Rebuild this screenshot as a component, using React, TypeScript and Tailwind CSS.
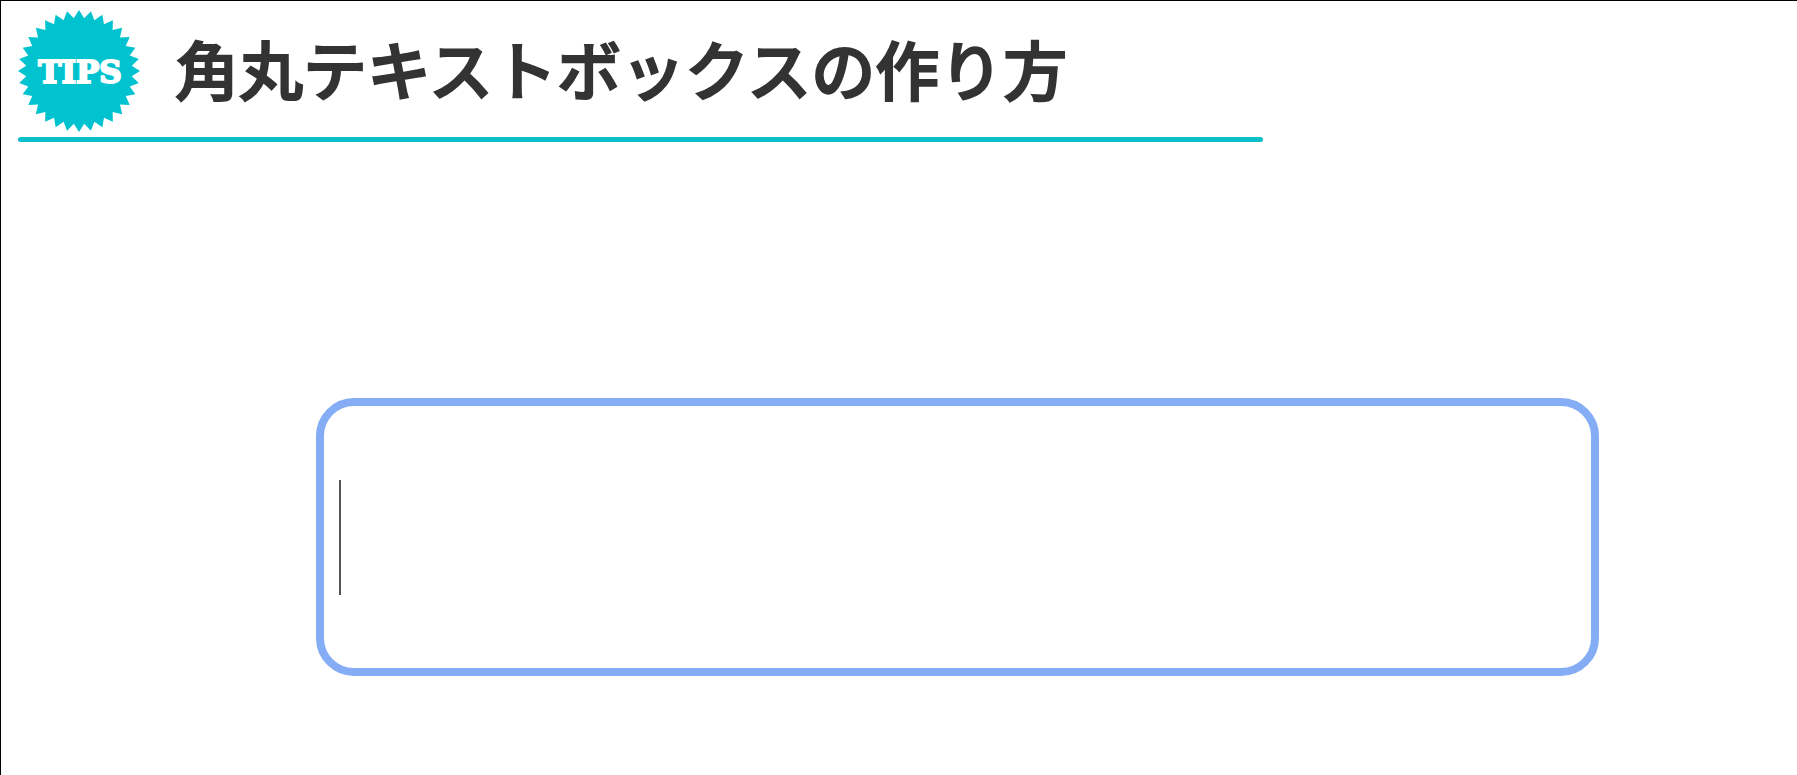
import React, { useState } from 'react';

const SPIKES = 32;

const burstPoints = Array.from({ length: SPIKES * 2 }, (_, i) => {
  const radius = i % 2 === 0 ? 61 : 53;
  const angle = (Math.PI * i) / SPIKES - Math.PI / 2;
  return `${(61 + radius * Math.cos(angle)).toFixed(2)},${(61 + radius * Math.sin(angle)).toFixed(2)}`;
}).join(' ');

const TipsBadge = (): JSX.Element => (
  <svg className="h-[122px] w-[122px] shrink-0" viewBox="0 0 122 122" role="img" aria-label="TIPS">
    <polygon points={burstPoints} fill="#00c3cf" />
    <text
      x="62"
      y="73"
      textAnchor="middle"
      fill="#fff"
      stroke="#fff"
      strokeWidth="2"
      className="font-['DejaVu_Serif',serif] text-[31px] font-bold"
    >
      TIPS
    </text>
  </svg>
);

const PageHeader = ({ title }: { title: string }): JSX.Element => (
  <header className="pl-[17px]">
    <div className="flex items-center gap-[35px]">
      <TipsBadge />
      <h1 className="whitespace-nowrap pb-2 font-['Noto_Sans_CJK_JP',sans-serif] text-[64px] font-medium leading-[80px] text-[#333] [-webkit-text-stroke:2px_#333]">
        {title}
      </h1>
    </div>
    <div className="mt-[5px] h-[5px] w-[70%] rounded-full bg-[#0bbfcb]" />
  </header>
);

const RoundedTextBox = (): JSX.Element => {
  const [value, setValue] = useState('');

  return (
    <label className="flex h-[278px] items-center rounded-[38px] border-8 border-[#84adf5] pl-[15px] pr-4">
      {value === '' && <span className="h-[115px] w-[2px] shrink-0 bg-[#555]" />}
      <input
        type="text"
        aria-label="テキスト"
        value={value}
        onChange={e => setValue(e.target.value)}
        className="h-[115px] min-w-0 flex-1 bg-transparent font-['Noto_Sans_CJK_JP',sans-serif] text-[64px] text-[#333] outline-none"
      />
    </label>
  );
};

const App = (): JSX.Element => (
  <div className="min-h-screen border-l border-t border-black bg-white pt-[9px]">
    <PageHeader title="角丸テキストボックスの作り方" />
    <main className="pb-[97px] pl-[315px] pr-[198px] pt-[256px]">
      <RoundedTextBox />
    </main>
  </div>
);

export default App;
